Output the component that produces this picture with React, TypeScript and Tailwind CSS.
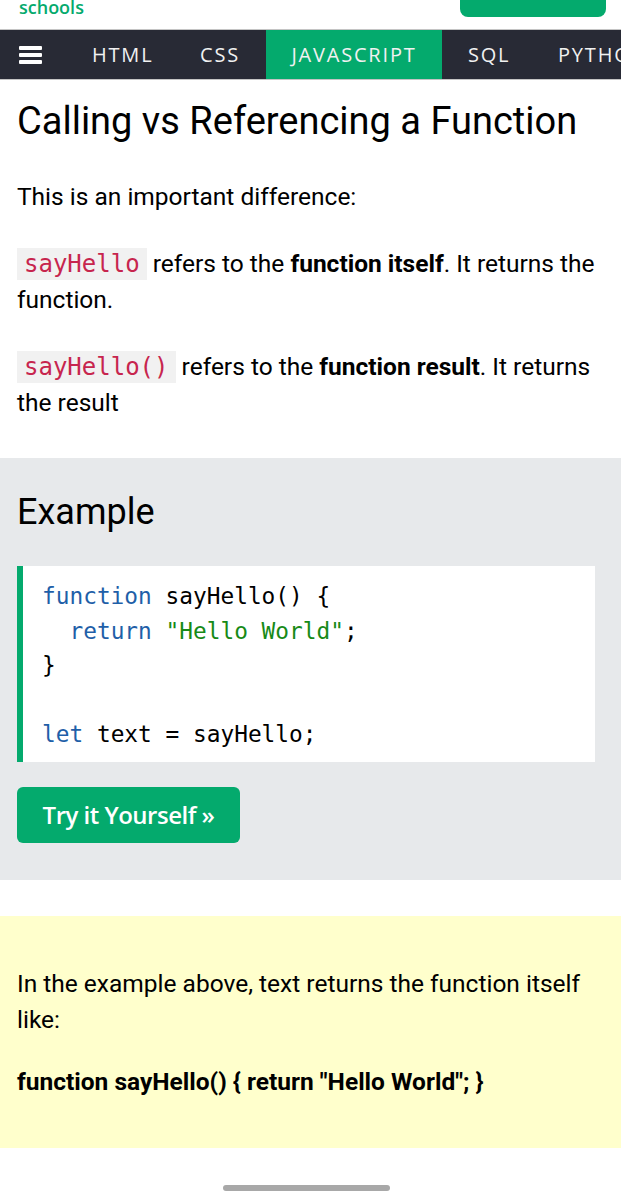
export default function App() {
  const body = { fontFamily: "Roboto, 'Noto Sans', sans-serif" };
  const mono = { fontFamily: "'DejaVu Sans Mono', 'Liberation Mono', monospace" };
  const nav = { fontFamily: "'Open Sans', 'Noto Sans', sans-serif" };

  return (
    <div className="w-[621px] h-[1200px] bg-white text-black overflow-hidden" style={body}>
      {/* top logo strip */}
      <div className="h-[29px] flex items-start overflow-hidden">
        <div
          className="ml-[19px] -mt-[5px] text-[18px] font-semibold text-[#04AA6D] leading-[24px]"
          style={nav}
        >
          schools
        </div>
        <div className="ml-auto mr-[15px] w-[146px] h-[17px] bg-[#04AA6D] rounded-b-lg" />
      </div>

      {/* nav */}
      <div
        className="h-[51px] bg-[#282A35] border-y border-[#c4c4c4] flex items-stretch text-[#f1f1f1] text-[20px] tracking-[1.8px] whitespace-nowrap"
        style={nav}
      >
        <div className="w-[69px] pl-[19px] flex flex-col justify-center gap-[3px] shrink-0">
          <div className="w-[23px] h-[4px] bg-white rounded-[1px]" />
          <div className="w-[23px] h-[4px] bg-white rounded-[1px]" />
          <div className="w-[23px] h-[4px] bg-white rounded-[1px]" />
        </div>
        <div className="w-[108px] shrink-0 pl-[23px] flex items-center">HTML</div>
        <div className="w-[89px] shrink-0 pl-[23px] flex items-center">CSS</div>
        <div className="w-[176px] shrink-0 flex items-center justify-center bg-[#04AA6D]">JAVASCRIPT</div>
        <div className="w-[93px] shrink-0 pl-[26px] flex items-center">SQL</div>
        <div className="pl-[23px] flex items-center">PYTHON</div>
      </div>

      {/* intro */}
      <div className="px-[17px]">
        <h1 className="mt-[18px] text-[38px] leading-[46px] font-normal">
          Calling vs Referencing a Function
        </h1>
        <p className="mt-[35px] text-[24.5px] leading-[36px]">This is an important difference:</p>
        <p className="mt-[31px] text-[24.5px] leading-[36px]">
          <code className="bg-[#f1f1f1] text-[#c7254e] px-[7px] py-[2px] text-[24px]" style={mono}>
            sayHello
          </code>{" "}
          refers to the <b>function itself</b>. It returns the function.
        </p>
        <p className="mt-[31px] mb-[37px] text-[24.5px] leading-[36px]">
          <code className="bg-[#f1f1f1] text-[#c7254e] px-[7px] py-[2px] text-[24px]" style={mono}>
            sayHello()
          </code>{" "}
          refers to the <b>function result</b>. It returns the result
        </p>
      </div>

      {/* example */}
      <div className="bg-[#E7E9EB] px-[17px] pt-[32px] pb-[37px]">
        <h2 className="text-[36px] leading-[44px] font-normal">Example</h2>
        <div
          className="mt-[32px] w-[578px] bg-white border-l-[6px] border-[#04AA6D] pl-[19px] pt-[13px] pb-[10px] text-[22.8px] leading-[34.5px] whitespace-pre"
          style={mono}
        >
          <div>
            <span className="text-[#1f5fa8]">function</span> sayHello() {"{"}
          </div>
          <div>
            {"  "}
            <span className="text-[#1f5fa8]">return</span>{" "}
            <span className="text-[#178a17]">"Hello World"</span>;
          </div>
          <div>{"}"}</div>
          <div>{" "}</div>
          <div>
            <span className="text-[#1f5fa8]">let</span> text = sayHello;
          </div>
        </div>
        <button
          className="mt-[25px] w-[223px] h-[56px] bg-[#04AA6D] text-white rounded-md text-[24px] font-semibold flex items-center justify-center tracking-[-0.5px]"
          style={nav}
        >
          Try it Yourself »
        </button>
      </div>

      {/* note */}
      <div className="mt-[36px] bg-[#FFFFCC] px-[17px] pt-[50px] pb-[48px] text-[24.5px] leading-[36px]">
        <p>In the example above, text returns the function itself like:</p>
        <p className="mt-[26px] font-bold">function sayHello() {"{"} return "Hello World"; {"}"}</p>
      </div>

      <div className="mt-[37px] ml-[223px] w-[167px] h-[6px] rounded-full bg-[#a8a8a8]" />
    </div>
  );
}
